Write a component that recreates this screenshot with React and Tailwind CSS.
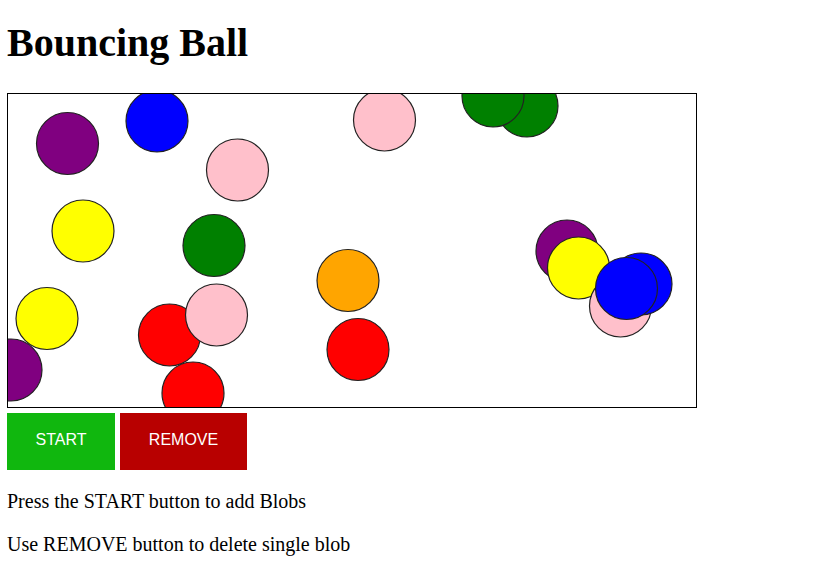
import React from "react";

const balls = [
  { x: 67.5, y: 143.5, c: "purple" },
  { x: 157, y: 121, c: "blue" },
  { x: 237.5, y: 170, c: "pink" },
  { x: 83, y: 231, c: "yellow" },
  { x: 214, y: 245.5, c: "green" },
  { x: 47, y: 318.5, c: "yellow" },
  { x: 11, y: 370, c: "purple" },
  { x: 169.5, y: 335, c: "red" },
  { x: 216.5, y: 315, c: "pink" },
  { x: 193, y: 393, c: "red" },
  { x: 384.5, y: 120, c: "pink" },
  { x: 527, y: 106, c: "green" },
  { x: 493, y: 96, c: "green" },
  { x: 348, y: 280.5, c: "orange" },
  { x: 358, y: 349.5, c: "red" },
  { x: 567, y: 251, c: "purple" },
  { x: 578.5, y: 268, c: "yellow" },
  { x: 620.5, y: 306, c: "pink" },
  { x: 641, y: 284, c: "blue" },
  { x: 626.5, y: 288.5, c: "blue" },
];

export default function App() {
  return (
    <div className="pl-[7px] bg-white min-h-[579px] text-black" style={{ fontFamily: '"Liberation Serif", "Times New Roman", serif' }}>
      <h1 className="pt-[20px] mb-[27px] text-[40px] leading-[46px] font-bold">Bouncing Ball</h1>
      <div className="w-[690px] h-[315px] border border-black">
        <svg width="688" height="313" viewBox="0 0 688 313" className="block">
          {balls.map((b, i) => (
            <circle key={i} cx={b.x - 8} cy={b.y - 94} r="31" fill={b.c} stroke="#222" strokeWidth="1.2" />
          ))}
        </svg>
      </div>
      <div className="flex gap-[5px] mt-[5px]" style={{ fontFamily: '"Liberation Sans", Arial, sans-serif' }}>
        <button className="w-[108px] h-[57px] pb-[3px] bg-[#10b70e] text-white text-[16px] flex items-center justify-center">START</button>
        <button className="w-[127px] h-[57px] pb-[3px] bg-[#b80000] text-white text-[16px] flex items-center justify-center">REMOVE</button>
      </div>
      <p className="mt-[20px] text-[20px] leading-[23px]">Press the START button to add Blobs</p>
      <p className="mt-[20px] text-[20px] leading-[23px]">Use REMOVE button to delete single blob</p>
    </div>
  );
}
